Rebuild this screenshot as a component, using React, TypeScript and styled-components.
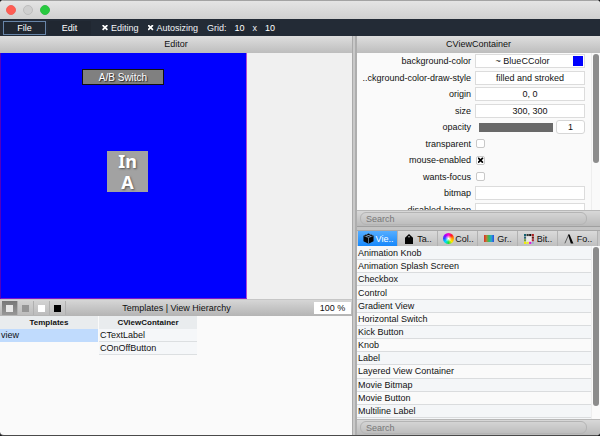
import React, { useState } from "react";
import styled, { createGlobalStyle, css } from "styled-components";

const GlobalStyle = createGlobalStyle`
  * { box-sizing: border-box; }
  body { margin: 0; background: #17181a; }
  body, button, input, select {
    font-family: "Liberation Sans", Arial, sans-serif;
    font-size: 9px;
    line-height: 12px;
    color: #111;
  }
  button, input, select { margin: 0; padding: 0; border: 0; border-radius: 0; background: none; appearance: none; }
  ul { margin: 0; padding: 0; list-style: none; }
`;

const barGradient = "linear-gradient(#dedede, #bdbdbd)";

const Window = styled.div`
  display: flex;
  flex-direction: column;
  height: 100vh;
  overflow: hidden;
  border-radius: 4px;
  border-bottom: 1px solid #4a4a4a;
  background: #fafafa;
`;

const TitleBar = styled.header`
  display: flex;
  align-items: center;
  gap: 7px;
  height: 19px;
  padding-left: 6px;
  flex: none;
  border-top: 1px solid #a3a3a3;
  background: linear-gradient(#e4e4e4, #d0d0d0);
`;

const Light = styled.button<{ $color: string; $ring: string }>`
  width: 10px;
  height: 10px;
  border-radius: 50%;
  background: ${(p) => p.$color};
  border: 1px solid ${(p) => p.$ring};
`;

const Toolbar = styled.nav`
  display: flex;
  align-items: center;
  height: 17px;
  padding-left: 3px;
  flex: none;
  background: #232b36;
  color: #f2f4f6;
`;

const MenuButton = styled.button<{ $active?: boolean }>`
  width: 43px;
  height: 14px;
  margin-right: 2px;
  color: #fff;
  background: #202731;
  border: 1px solid ${(p) => (p.$active ? "#6885a8" : "#202731")};
`;

const cross = css`
  content: "";
  width: 6px;
  height: 6px;
  background: currentColor;
  clip-path: polygon(0 20%, 20% 0, 50% 30%, 80% 0, 100% 20%, 70% 50%, 100% 80%, 80% 100%, 50% 70%, 20% 100%, 0 80%, 30% 50%);
`;

const ToolCheck = styled.label`
  display: flex;
  align-items: center;
  gap: 3px;
  margin-left: 9px;
`;

const ToolCheckBox = styled.input`
  display: grid;
  place-items: center;
  width: 6px;
  height: 8px;
  color: #fff;
  &:checked::before { ${cross} }
`;

const GridSize = styled.div`
  display: flex;
  align-items: center;
  gap: 3px;
  margin-left: 9px;
`;

const GridInput = styled.input`
  width: 20px;
  height: 14px;
  text-align: center;
  color: #fff;
  background: #202731;
`;

const Workspace = styled.main`
  display: grid;
  grid-template-columns: minmax(0, 1fr) 5px 243px;
  flex: 1;
  min-height: 0;
`;

const Pane = styled.section`
  display: flex;
  flex-direction: column;
  min-width: 0;
  min-height: 0;
`;

const VSplitter = styled.div`
  background: #c9c9c9;
  border-left: 1px solid #aaa;
  border-right: 2px solid #aeaeae;
`;

const HSplitter = styled.div`
  height: 5px;
  flex: none;
  background: #c4c4c4;
  border-top: 1px solid #a0a0a0;
  border-bottom: 1px solid #a8a8a8;
`;

const PanelTitle = styled.h2`
  margin: 0;
  height: 17px;
  flex: none;
  font-size: 9px;
  font-weight: 400;
  line-height: 17px;
  text-align: center;
  background: ${barGradient};
`;

const EditorArea = styled.div`
  flex: none;
  background: #f0f0f0;
`;

const Canvas = styled.div`
  position: relative;
  width: 247px;
  height: 246px;
  background: #0000ff;
  border-right: 1px solid #b04ad8;
  border-bottom: 1px solid #7a18c8;
  border-left: 1px solid #5000c0;
`;

const LabelView = styled.div`
  position: absolute;
  left: 81px;
  top: 16px;
  width: 82px;
  height: 16px;
  border: 1px solid #111;
  background: #808080;
  color: #fff;
  font-size: 10px;
  line-height: 15px;
  text-align: center;
  text-shadow: 1px 1px 1px #222;
`;

const SwitchView = styled.button`
  position: absolute;
  left: 106px;
  top: 98px;
  width: 41px;
  height: 41px;
  background: #a2a2a2;
  color: #fff;
  font-family: "Noto Sans", sans-serif;
  font-size: 18px;
  font-weight: 700;
  line-height: 21px;
  text-shadow: 1px 1px 2px #555;
`;

const HierarchyBar = styled.div`
  display: grid;
  grid-template-columns: 1fr auto 1fr;
  align-items: center;
  height: 17px;
  flex: none;
  padding: 0 1px 0 2px;
  background: linear-gradient(#d6d6d6, #b4b4b4);
  border-top: 1px solid #c6c6c6;
`;

const Swatches = styled.div`
  display: flex;
`;

const SwatchButton = styled.button<{ $color: string; $active?: boolean }>`
  display: grid;
  place-items: center;
  width: 16px;
  height: 14px;
  border-right: 1px solid #b0b0b0;
  background: ${(p) => (p.$active ? "linear-gradient(#777, #979797)" : "linear-gradient(#d2d2d2, #bcbcbc)")};
  &::before {
    content: "";
    width: 7px;
    height: 7px;
    background: ${(p) => p.$color};
  }
`;

const ZoomSelect = styled.select`
  justify-self: end;
  width: 37px;
  height: 12px;
  background: #fff;
  text-align-last: center;
`;

const Browser = styled.div`
  display: grid;
  grid-template-columns: 98px 98px;
  gap: 1px;
  align-items: start;
  flex: 1;
`;

const ColumnTitle = styled.h3`
  margin: 0;
  height: 13px;
  font-size: 8px;
  font-weight: 700;
  line-height: 13px;
  text-align: center;
  background: #e9ecee;
`;

const TreeItem = styled.li<{ $selected?: boolean }>`
  height: 13px;
  padding-left: 1px;
  line-height: 13px;
  background: ${(p) => (p.$selected ? "#c0dbfd" : "#f5f7f9")};
  border-bottom: 1px solid ${(p) => (p.$selected ? "#c0dbfd" : "#dcdfe1")};
`;

const ScrollPane = styled.div<{ $fill?: boolean }>`
  display: grid;
  grid-template-columns: minmax(0, 1fr) 9px;
  height: ${(p) => (p.$fill ? "auto" : "157px")};
  flex: ${(p) => (p.$fill ? "1" : "none")};
  min-height: 0;
  overflow: hidden;
`;

const Scrollbar = styled.div<{ $size: string }>`
  padding: 1px 2px 1px 1px;
  border-left: 1px solid #eeeeee;
  &::before {
    content: "";
    display: block;
    width: 6px;
    height: ${(p) => p.$size};
    border-radius: 3px;
    background: #8c8c8c;
  }
`;

const Properties = styled.div`
  display: flex;
  flex-direction: column;
  justify-content: space-between;
  height: 164px;
  padding: 1px 6px 0 0;
`;

const Property = styled.div`
  display: grid;
  grid-template-columns: 114px minmax(0, 1fr);
  gap: 4px;
  align-items: center;
  height: 14px;
`;

const PropertyName = styled.label`
  text-align: right;
  white-space: nowrap;
`;

const fieldBox = css`
  width: 100%;
  height: 14px;
  background: #fff;
  border: 1px solid #dcdcdc;
  text-align: center;
  text-align-last: center;
`;

const Field = styled.input`${fieldBox}`;
const FieldSelect = styled.select`${fieldBox}`;

const ColorField = styled.div`
  ${fieldBox}
  display: flex;
  align-items: center;
  padding: 0 1px 0 10px;
`;

const ColorSelect = styled.select`
  flex: 1;
  height: 12px;
  text-align-last: center;
  padding-right: 14px;
`;

const ColorChip = styled.span`
  width: 10px;
  height: 10px;
  background: #0000ff;
`;

const OpacityRow = styled.div`
  display: flex;
  align-items: center;
  gap: 3px;
  padding-left: 4px;
`;

const Slider = styled.input`
  flex: 1;
  min-width: 0;
  height: 9px;
  background: #696969;
  &::-webkit-slider-thumb { appearance: none; width: 1px; height: 9px; background: #696969; }
`;

const NumberField = styled.input`
  width: 29px;
  height: 14px;
  border: 1px solid #d6d6d6;
  border-radius: 3px;
  background: #fff;
  text-align: center;
`;

const PropertyCheck = styled.input`
  display: grid;
  place-items: center;
  width: 9px;
  height: 9px;
  margin-left: 1px;
  border: 1px solid #c8c8c8;
  border-radius: 2px;
  background: #fff;
  color: #000;
  &:checked::before { ${cross} }
`;

const SearchBar = styled.div`
  flex: none;
  height: 16px;
  padding: 1px 13px 1px 3px;
  border-top: 1px solid #b8b8b8;
  background: linear-gradient(#d8d8d8, #bababa);
`;

const SearchInput = styled.input`
  display: block;
  width: 100%;
  height: 13px;
  padding-left: 5px;
  border: 1px solid #b4b4b4;
  border-radius: 6px;
  &::placeholder { color: #777; opacity: 1; }
`;

const Tabs = styled.div`
  display: grid;
  grid-template-columns: repeat(6, minmax(0, 1fr));
  height: 15px;
  flex: none;
  padding: 0 2px 0 1px;
  background: #c8c8c8;
`;

const Tab = styled.button<{ $active: boolean }>`
  display: grid;
  grid-template-columns: 13px minmax(0, 1fr);
  align-items: center;
  justify-items: center;
  padding: 0 3px 0 4px;
  border-right: 1px solid #b2b2b2;
  color: ${(p) => (p.$active ? "#fff" : "#111")};
  background: ${(p) => (p.$active ? "linear-gradient(#55adff, #1688fb)" : "linear-gradient(#dadada, #c0c0c0)")};
`;

const Wheel = styled.span`
  width: 11px;
  height: 11px;
  border-radius: 50%;
  background: radial-gradient(#fff, transparent 45%),
    conic-gradient(#ff00c8, #ff2020, #ff9a00, #ffee00, #20e040, #00dcff, #2050ff, #a000ff, #ff00c8);
`;

const Rainbow = styled.span`
  width: 10px;
  height: 7px;
  background: linear-gradient(90deg, #e02828, #b88030 25%, #28c060 50%, #28a8d0 72%, #3048e0);
`;

const ViewList = styled.ul`
  display: flex;
  flex-direction: column;
  padding: 1px 0;
  background: #f4f6f8;
`;

const ViewItem = styled.li`
  display: flex;
  align-items: center;
  flex: 1;
  min-height: 0;
  padding-left: 1px;
  border-bottom: 1px solid #dadcde;
  background: #fafafa;
  &:nth-child(odd) { background: #f4f6f8; }
`;

const CubeIcon = () => (
  <svg width="11" height="11" viewBox="0 0 12 12">
    <path d="M6 .5 11.5 2.6V9L6 11.7.5 9V2.6Z" fill="#050505" />
    <path d="M.7 2.8 6 5 11.3 2.8M6 5v6.5M3.2 1.7 8.7 3.9M8.8 1.7 3.3 3.9" fill="none" stroke="#a5cdf5" strokeWidth=".6" />
  </svg>
);

const TagIcon = () => (
  <svg width="8" height="10" viewBox="0 0 8 10">
    <path d="M4 0 8 3.8V10H0V3.8Z" fill="#050505" />
    <circle cx="4" cy="2.8" r=".8" fill="#ccc" />
  </svg>
);

const pixels = ["#106070", "#333", "#101010", "#b02020", "#306070", "", "", "#701010", "#70a040", "", "", "#b02030", "#f0f000", "#f0f020", "#e010e0", "#a0b0d0"];

const PixelsIcon = () => (
  <svg width="10" height="10" viewBox="0 0 10 10">
    <rect x="2" y="2" width="6" height="6" fill="#e8e8e8" />
    {pixels.map((fill, i) =>
      fill ? <rect key={i} x={(i % 4) * 2.6} y={Math.floor(i / 4) * 2.6} width="2.1" height="2.1" fill={fill} /> : null
    )}
  </svg>
);

const FontIcon = () => (
  <svg width="10" height="10" viewBox="0 0 10 10">
    <path d="M.9 9.3 4.6.8" stroke="#444" strokeWidth=".8" />
    <path d="M4 .5H5.6L9.4 9.5H6.8Z" fill="#050505" />
  </svg>
);

const tabs = [
  { label: "Vie..", icon: <CubeIcon /> },
  { label: "Ta..", icon: <TagIcon /> },
  { label: "Col..", icon: <Wheel /> },
  { label: "Gr..", icon: <Rainbow /> },
  { label: "Bit..", icon: <PixelsIcon /> },
  { label: "Fo..", icon: <FontIcon /> },
];

const views = [
  "Animation Knob", "Animation Splash Screen", "Checkbox", "Control", "Gradient View",
  "Horizontal Switch", "Kick Button", "Knob", "Label", "Layered View Container",
  "Movie Bitmap", "Movie Button", "Multiline Label",
];

const PropertyRow = ({ name, id, children }: { name: string; id: string; children: React.ReactNode }) => (
  <Property>
    <PropertyName htmlFor={id}>{name}</PropertyName>
    {children}
  </Property>
);

export default function App() {
  const [tab, setTab] = useState(0);
  const [opacity, setOpacity] = useState("1");

  return (
    <>
      <GlobalStyle />
      <Window>
        <TitleBar>
          <Light $color="#ff5c53" $ring="#f0625a" aria-label="Close" />
          <Light $color="#cfcfcf" $ring="#bdbdbd" aria-label="Minimize" />
          <Light $color="#27c93f" $ring="#2fc045" aria-label="Zoom" />
        </TitleBar>
        <Toolbar>
          <MenuButton $active>File</MenuButton>
          <MenuButton>Edit</MenuButton>
          <ToolCheck><ToolCheckBox type="checkbox" defaultChecked />Editing</ToolCheck>
          <ToolCheck><ToolCheckBox type="checkbox" defaultChecked />Autosizing</ToolCheck>
          <GridSize>
            <label htmlFor="grid-x">Grid:</label>
            <GridInput id="grid-x" defaultValue="10" />
            <label htmlFor="grid-y">x</label>
            <GridInput id="grid-y" defaultValue="10" />
          </GridSize>
        </Toolbar>
        <Workspace>
          <Pane>
            <PanelTitle>Editor</PanelTitle>
            <EditorArea>
              <Canvas>
                <LabelView>A/B Switch</LabelView>
                <SwitchView>In<br />A</SwitchView>
              </Canvas>
            </EditorArea>
            <HierarchyBar>
              <Swatches>
                <SwatchButton $color="#e8e8e8" $active aria-label="Light background" />
                <SwatchButton $color="#969696" aria-label="Gray background" />
                <SwatchButton $color="#ffffff" aria-label="White background" />
                <SwatchButton $color="#000000" aria-label="Black background" />
              </Swatches>
              <span>Templates | View Hierarchy</span>
              <ZoomSelect aria-label="Zoom"><option>100 %</option></ZoomSelect>
            </HierarchyBar>
            <Browser>
              <div>
                <ColumnTitle>Templates</ColumnTitle>
                <ul><TreeItem $selected>view</TreeItem></ul>
              </div>
              <div>
                <ColumnTitle>CViewContainer</ColumnTitle>
                <ul>
                  <TreeItem>CTextLabel</TreeItem>
                  <TreeItem>COnOffButton</TreeItem>
                </ul>
              </div>
            </Browser>
          </Pane>
          <VSplitter />
          <Pane>
            <PanelTitle>CViewContainer</PanelTitle>
            <ScrollPane>
              <Properties>
                <PropertyRow name="background-color" id="bg">
                  <ColorField>
                    <ColorSelect id="bg"><option>~ BlueCColor</option></ColorSelect>
                    <ColorChip />
                  </ColorField>
                </PropertyRow>
                <PropertyRow name="..ckground-color-draw-style" id="style">
                  <FieldSelect id="style"><option>filled and stroked</option></FieldSelect>
                </PropertyRow>
                <PropertyRow name="origin" id="origin"><Field id="origin" defaultValue="0, 0" /></PropertyRow>
                <PropertyRow name="size" id="size"><Field id="size" defaultValue="300, 300" /></PropertyRow>
                <PropertyRow name="opacity" id="opacity">
                  <OpacityRow>
                    <Slider id="opacity" type="range" min="0" max="1" step="0.01" value={opacity} onChange={(e) => setOpacity(e.target.value)} />
                    <NumberField aria-label="opacity value" value={opacity} onChange={(e) => setOpacity(e.target.value)} />
                  </OpacityRow>
                </PropertyRow>
                <PropertyRow name="transparent" id="transparent"><PropertyCheck id="transparent" type="checkbox" /></PropertyRow>
                <PropertyRow name="mouse-enabled" id="mouse"><PropertyCheck id="mouse" type="checkbox" defaultChecked /></PropertyRow>
                <PropertyRow name="wants-focus" id="focus"><PropertyCheck id="focus" type="checkbox" /></PropertyRow>
                <PropertyRow name="bitmap" id="bitmap"><Field id="bitmap" /></PropertyRow>
                <PropertyRow name="disabled-bitmap" id="disabled"><Field id="disabled" /></PropertyRow>
              </Properties>
              <Scrollbar $size="67%" />
            </ScrollPane>
            <SearchBar><SearchInput type="text" placeholder="Search" aria-label="Search properties" /></SearchBar>
            <HSplitter />
            <Tabs role="tablist">
              {tabs.map((t, i) => (
                <Tab key={t.label} role="tab" aria-selected={tab === i} $active={tab === i} onClick={() => setTab(i)}>
                  {t.icon}
                  <span>{t.label}</span>
                </Tab>
              ))}
            </Tabs>
            <ScrollPane $fill>
              <ViewList>{views.map((v) => <ViewItem key={v}>{v}</ViewItem>)}</ViewList>
              <Scrollbar $size="93%" />
            </ScrollPane>
            <SearchBar><SearchInput type="text" placeholder="Search" aria-label="Search views" /></SearchBar>
          </Pane>
        </Workspace>
      </Window>
    </>
  );
}
